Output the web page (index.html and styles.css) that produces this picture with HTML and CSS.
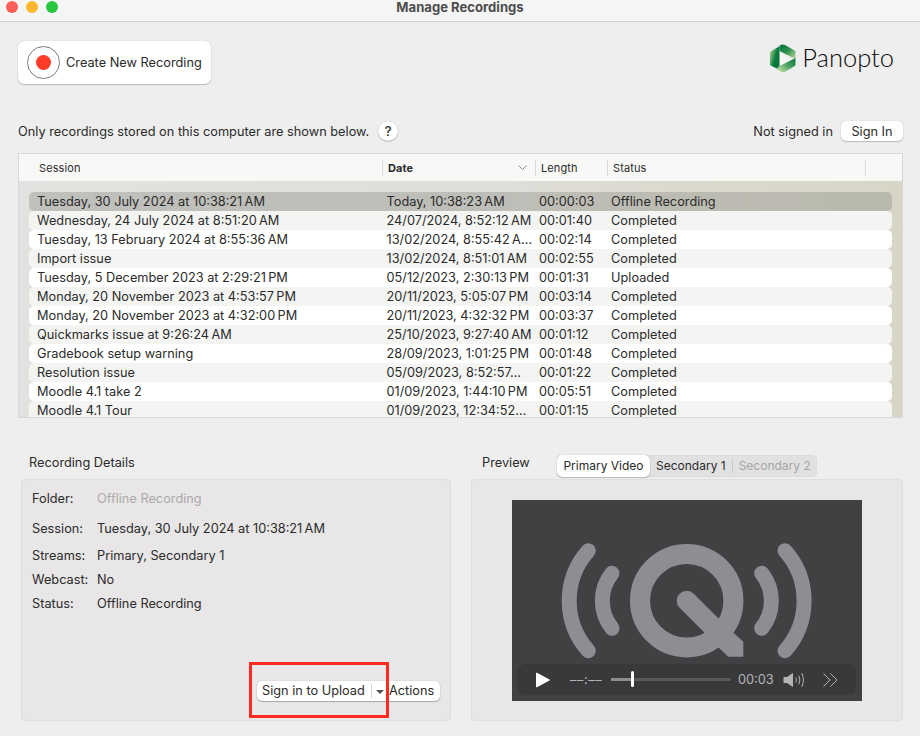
FILE: index.html
```html
<!DOCTYPE html>
<html lang="en">
<head>
  <meta charset="UTF-8" />
  <title>Manage Recordings</title>
  <link rel="stylesheet" href="styles.css">
</head>
<body>
  <header class="titlebar">
    <div class="lights">
      <span class="light red"></span>
      <span class="light yellow"></span>
      <span class="light green"></span>
    </div>
    <div class="title">Manage Recordings</div>
  </header>

  <main class="window">
    <section class="top">
      <button class="create-btn">
        <span class="rec-ring"><span class="rec-dot"></span></span>
        Create New Recording
      </button>
      <div class="logo">
        <svg class="logo-mark" width="26" height="29" viewBox="0 0 26 29">
          <defs>
            <linearGradient id="gradTop" x1="0.1" y1="0.1" x2="1" y2="0.9">
              <stop offset="0" stop-color="#0a7a3e" />
              <stop offset="0.45" stop-color="#2f9150" />
              <stop offset="1" stop-color="#b4d698" />
            </linearGradient>
            <linearGradient id="gradLeft" x1="0" y1="0.1" x2="1" y2="0.8">
              <stop offset="0" stop-color="#a8cf8c" />
              <stop offset="0.55" stop-color="#0d7c40" />
              <stop offset="1" stop-color="#06703a" />
            </linearGradient>
            <linearGradient id="gradBottom" x1="1" y1="0.1" x2="0.1" y2="0.9">
              <stop offset="0" stop-color="#0a7a3e" />
              <stop offset="0.5" stop-color="#4da263" />
              <stop offset="1" stop-color="#c0dca2" />
            </linearGradient>
          </defs>
          <path d="M0.5 8 L9 3 V25 L0.5 21 Z" fill="url(#gradLeft)" stroke="url(#gradLeft)" stroke-linejoin="round" />
          <path d="M9.5 1.5 Q13 -0.5 16 1.5 L24.5 6.5 Q25.5 7 25.5 8.5 V15 L9.5 7 Z" fill="url(#gradTop)" />
          <path d="M25.5 14 V20.5 Q25.5 21.8 24 22.5 L15.5 27.5 Q13 29 10.5 27.5 L7 25.5 L8 23 Z" fill="url(#gradBottom)" />
          <path d="M10 9 L20 15 L10 21 Z" fill="#f4f4f0" />
        </svg>
        <span class="logo-text">Panopto</span>
      </div>
    </section>

    <section class="notice">
      <span>Only recordings stored on this computer are shown below.</span>
      <button class="help-btn">?</button>
      <span class="signed-out">Not signed in</span>
      <button class="signin-btn">Sign In</button>
    </section>

    <section class="list">
      <div class="list-head">
        <div class="th">Session</div>
        <div class="th th-date">Date <svg width="9" height="5" viewBox="0 0 9 5"><path d="M0.5 0.5 L4.5 4.5 L8.5 0.5" fill="none" stroke="#8a8a8a" /></svg></div>
        <div class="th">Length</div>
        <div class="th">Status</div>
        <div class="th"></div>
      </div>
      <div class="list-body">
        <div class="row selected"><span>Tuesday, 30 July 2024 at 10:38:21&#8239;AM</span><span>Today, 10:38:23&#8239;AM</span><span>00:00:03</span><span>Offline Recording</span></div>
        <div class="row"><span>Wednesday, 24 July 2024 at 8:51:20&#8239;AM</span><span>24/07/2024, 8:52:12&#8239;AM</span><span>00:01:40</span><span>Completed</span></div>
        <div class="row"><span>Tuesday, 13 February 2024 at 8:55:36&#8239;AM</span><span>13/02/2024, 8:55:42&#8239;A…</span><span>00:02:14</span><span>Completed</span></div>
        <div class="row"><span>Import issue</span><span>13/02/2024, 8:51:01&#8239;AM</span><span>00:02:55</span><span>Completed</span></div>
        <div class="row"><span>Tuesday, 5 December 2023 at 2:29:21&#8239;PM</span><span>05/12/2023, 2:30:13&#8239;PM</span><span>00:01:31</span><span>Uploaded</span></div>
        <div class="row"><span>Monday, 20 November 2023 at 4:53:57&#8239;PM</span><span>20/11/2023, 5:05:07&#8239;PM</span><span>00:03:14</span><span>Completed</span></div>
        <div class="row"><span>Monday, 20 November 2023 at 4:32:00&#8239;PM</span><span>20/11/2023, 4:32:32&#8239;PM</span><span>00:03:37</span><span>Completed</span></div>
        <div class="row"><span>Quickmarks issue at 9:26:24&#8239;AM</span><span>25/10/2023, 9:27:40&#8239;AM</span><span>00:01:12</span><span>Completed</span></div>
        <div class="row"><span>Gradebook setup warning</span><span>28/09/2023, 1:01:25&#8239;PM</span><span>00:01:48</span><span>Completed</span></div>
        <div class="row"><span>Resolution issue</span><span>05/09/2023, 8:52:57…</span><span>00:01:22</span><span>Completed</span></div>
        <div class="row"><span>Moodle 4.1 take 2</span><span>01/09/2023, 1:44:10&#8239;PM</span><span>00:05:51</span><span>Completed</span></div>
        <div class="row"><span>Moodle 4.1 Tour</span><span>01/09/2023, 12:34:52…</span><span>00:01:15</span><span>Completed</span></div>
      </div>
    </section>

    <section class="bottom">
      <div class="details">
        <div class="section-title details-title">Recording Details</div>
        <div class="panel details-panel">
          <div class="detail folder"><span class="label">Folder:</span><span class="muted">Offline Recording</span></div>
          <div class="detail session"><span class="label">Session:</span><span>Tuesday, 30 July 2024 at 10:38:21&#8239;AM</span></div>
          <div class="detail"><span class="label">Streams:</span><span>Primary, Secondary 1</span></div>
          <div class="detail"><span class="label">Webcast:</span><span>No</span></div>
          <div class="detail"><span class="label">Status:</span><span>Offline Recording</span></div>
          <div class="upload-btn">
            <span class="upload-label">Sign in to Upload</span>
            <span class="upload-arrow"></span>
            <span>Actions</span>
          </div>
        </div>
      </div>

      <div class="preview">
        <div class="preview-head">
          <div class="section-title preview-title">Preview</div>
          <div class="tabs">
            <span class="tab active">Primary Video</span>
            <span class="tab">Secondary 1</span>
            <span class="tab-sep"></span>
            <span class="tab disabled">Secondary 2</span>
          </div>
        </div>
        <div class="panel preview-panel">
          <div class="video">
            <svg class="q-logo" width="350" height="201" viewBox="0 0 350 201">
              <g fill="none" stroke="#8e8e92" stroke-linecap="round">
                <circle cx="174.7" cy="100.7" r="46.7" stroke-width="20" />
                <path d="M174.7 100.7 L210 136" stroke-width="20" />
                <path d="M100 73.3 A44 44 0 0 0 100 128.3" stroke-width="15" />
                <path d="M76.3 50.7 A75 75 0 0 0 76.3 150.7" stroke-width="15" />
                <path d="M249.7 73.3 A44 44 0 0 1 249.7 128.3" stroke-width="15" />
                <path d="M273 50.7 A75 75 0 0 1 273 150.7" stroke-width="15" />
              </g>
              <path d="M221.3 132.7 L231.3 141.7 V156.7 H216.3 L206.3 147.3 Z" fill="#8e8e92" />
            </svg>
            <div class="controls">
              <svg class="play" width="14" height="16" viewBox="0 0 14 16"><path d="M0.5 1 L13.5 8 L0.5 15 Z" fill="#fff" stroke="#fff" stroke-linejoin="round" /></svg>
              <span class="time-left">––:––</span>
              <div class="track"><div class="track-fill"></div><div class="thumb"></div></div>
              <span class="time-right">00:03</span>
              <svg class="volume" width="22" height="16" viewBox="0 0 22 16">
                <path d="M0.5 5 H4 L10 1 V15 L4 11 H0.5 Z" fill="#b4b4b6" />
                <g fill="none" stroke="#b4b4b6" stroke-linecap="round">
                  <path d="M13 6 Q14 8 13 10" />
                  <path d="M16 4 Q18 8 16 12" />
                  <path d="M19 1.5 Q22 8 19 14.5" />
                </g>
              </svg>
              <svg class="forward" width="15" height="14" viewBox="0 0 15 14">
                <g fill="none" stroke="#b4b4b6"><path d="M0.5 0.5 L7 7 L0.5 13.5" /><path d="M7.5 0.5 L14 7 L7.5 13.5" /></g>
              </svg>
            </div>
          </div>
        </div>
      </div>
    </section>
  </main>

  <div class="callout"></div>
</body>
</html>
```

FILE: styles.css
```css
* {
  box-sizing: border-box;
}

html, body {
  margin: 0;
  height: 100%;
}

body {
  width: 920px;
  height: 736px;
  overflow: hidden;
  position: relative;
  background-color: #eeeeee;
  color: #2b2b2b;
  font-family: Inter, "Liberation Sans", sans-serif;
  font-size: 12.75px;
}

button {
  font-family: inherit;
  font-size: inherit;
  color: inherit;
  border: none;
  padding: 0;
}

/* Title bar */
.titlebar {
  height: 22px;
  background-color: #f5f5f5;
  border-bottom: 1px solid #d2d2d2;
  display: flex;
  align-items: center;
  justify-content: center;
  position: relative;
}

.lights {
  position: absolute;
  left: 6px;
  top: 1px;
  display: flex;
  gap: 8px;
}

.light {
  width: 12px;
  height: 12px;
  border-radius: 50%;
}

.red { background-color: #fc5f57; }
.yellow { background-color: #fcb72f; }
.green { background-color: #29c63f; }

.title {
  font-weight: 700;
  font-size: 13.1px;
  color: #4d4d4d;
  margin-top: -8px;
}

/* Top area */
.top {
  height: 93px;
  display: flex;
  justify-content: space-between;
  align-items: flex-start;
  padding: 19px 26px 0 18px;
}

.create-btn {
  width: 193px;
  height: 43px;
  background: #fff;
  border-radius: 6px;
  box-shadow: 0 0 1px rgba(0,0,0,0.3), 0 1px 1px rgba(0,0,0,0.2);
  display: flex;
  align-items: center;
  gap: 6px;
  padding-left: 9px;
}

.rec-ring {
  width: 33px;
  height: 33px;
  border: 1px solid #7d7d7d;
  border-radius: 50%;
  display: flex;
  align-items: center;
  justify-content: center;
}

.rec-dot {
  width: 15px;
  height: 15px;
  border-radius: 50%;
  background-color: #ff3b2a;
}

.logo {
  display: flex;
  align-items: center;
  gap: 6px;
  margin-top: 3px;
}

.logo-text {
  font-family: Lato, sans-serif;
  font-weight: 300;
  font-size: 25.5px;
  color: #0a0a0a;
  line-height: 29px;
  margin-top: -2px;
}

.notice {
  height: 32px;
  display: flex;
  align-items: center;
  padding: 0 17px 0 18px;
}

.help-btn {
  width: 20px;
  height: 20px;
  margin-left: 9px;
  border-radius: 50%;
  background: #fff;
  font-weight: 500;
  font-size: 13px;
  box-shadow: 0 0 1px rgba(0,0,0,0.3), 0 1px 1px rgba(0,0,0,0.2);
}

.signed-out {
  margin-left: auto;
}

.signin-btn {
  width: 62px;
  height: 20px;
  margin-left: 8px;
  border-radius: 5px;
  background: #fff;
  box-shadow: 0 0 1px rgba(0,0,0,0.3), 0 1px 1px rgba(0,0,0,0.2);
}

/* Recording list */
.list {
  margin: 6px 17px 0 18px;
  height: 265px;
  border: 1px solid #d8d8d8;
  overflow: hidden;
}

.list-head {
  height: 27px;
  background-color: #f8f8f7;
  display: grid;
  grid-template-columns: 364px 153px 72px 258px 1fr;
  align-items: center;
  font-size: 11px;
  padding-left: 0;
}

.th {
  height: 16px;
  line-height: 16px;
  padding-left: 5px;
  border-right: 1px solid #dcdcdc;
  display: flex;
  align-items: center;
  justify-content: space-between;
  padding-right: 8px;
  letter-spacing: 0.1px;
}

.th:first-child {
  padding-left: 20px;
}

.th:last-child {
  border-right: none;
}

.th-date {
  font-weight: 700;
}

.list-body {
  height: 237px;
  padding: 11px 10px 0;
  background: linear-gradient(100deg, #e2e2e0 0%, #dfdeda 50%, #dbd9cc 75%, #d6d5c6 100%);
}

.row {
  height: 19px;
  line-height: 19px;
  display: grid;
  grid-template-columns: 349.5px 152.5px 72px 1fr;
  padding-left: 8px;
  border-radius: 5px;
  white-space: nowrap;
  background-color: #f4f5f3;
}

.row:nth-child(odd) {
  background-color: #fff;
}

.row.selected {
  background-color: rgba(150, 150, 145, 0.45);
}

/* Bottom panels */
.bottom {
  display: grid;
  grid-template-columns: 430px 432px;
  column-gap: 20px;
  padding: 32px 0 0 21px;
}

.section-title {
  height: 29px;
  line-height: 26px;
}

.details-title {
  padding-left: 8px;
}

.panel {
  height: 242px;
  background-color: #e8e6e7;
  border: 1px solid #e0dfdf;
  border-radius: 4px;
  position: relative;
}

.details-panel {
  padding: 7px 0 0 10px;
}

.detail {
  height: 24px;
  line-height: 24px;
  display: grid;
  grid-template-columns: 65px 1fr;
}

.detail.folder {
  margin-bottom: 6px;
}

.detail.session {
  margin-bottom: 3px;
}

.muted {
  color: #aaaaaa;
}

.upload-btn {
  position: absolute;
  left: 235px;
  top: 201px;
  width: 183px;
  height: 20px;
  background: #fff;
  border-radius: 5px;
  box-shadow: 0 0 1px rgba(0,0,0,0.3), 0 1px 1px rgba(0,0,0,0.25);
  display: flex;
  align-items: center;
  padding-left: 5px;
  line-height: 20px;
}

.upload-label {
  width: 110px;
  border-right: 1px solid #d4d4d4;
  height: 14px;
  line-height: 14px;
  white-space: nowrap;
}

.upload-arrow {
  width: 0;
  height: 0;
  margin: 1px 5px 0 4px;
  border-left: 4px solid transparent;
  border-right: 4px solid transparent;
  border-top: 4px solid #555;
}

/* Preview */
.preview-head {
  display: flex;
  height: 29px;
}

.preview-title {
  width: 86px;
  padding-left: 11px;
}

.tabs {
  height: 22px;
  margin-top: 5px;
  width: 260px;
  background-color: #e2e1e1;
  border-radius: 5px;
  box-shadow: inset 0 0 0 1px #dcdbdb;
  display: flex;
  align-items: center;
  white-space: nowrap;
  font-size: 12px;
}

.tab {
  flex-shrink: 0;
  height: 22px;
  line-height: 22px;
  padding: 0 6px;
}

.tab.active {
  width: 93px;
  padding: 0;
  background: #fff;
  border-radius: 5px;
  box-shadow: 0 0 1px rgba(0,0,0,0.4), 0 1px 1px rgba(0,0,0,0.2);
  text-align: center;
}

.tab.disabled {
  color: #a5a5a5;
}

.tab-sep {
  flex-shrink: 0;
  width: 1px;
  height: 14px;
  background-color: #c8c8c8;
}

.preview-panel {
  display: flex;
  justify-content: center;
  padding-top: 20px;
}

.video {
  width: 350px;
  height: 201px;
  background-color: #414143;
  position: relative;
}

.q-logo {
  display: block;
}

.controls {
  position: absolute;
  left: 6px;
  top: 164px;
  width: 338px;
  height: 31px;
  border-radius: 8px;
  background-color: #39393b;
  display: flex;
  align-items: center;
  color: #b4b4b6;
  padding-left: 18px;
}

.time-left {
  margin-left: 20px;
  width: 41px;
  white-space: nowrap;
  letter-spacing: 0.6px;
}

.track {
  position: relative;
  width: 120px;
  height: 3px;
  background-color: #59595b;
  border-radius: 2px;
}

.track-fill {
  width: 21px;
  height: 3px;
  background-color: #8e8e90;
}

.thumb {
  position: absolute;
  left: 20px;
  top: -7px;
  width: 3px;
  height: 16px;
  border-radius: 2px;
  background-color: #fff;
}

.time-right {
  margin-left: 7px;
  width: 45px;
}

.forward {
  margin-left: 18px;
}

/* Red annotation box */
.callout {
  position: absolute;
  left: 249px;
  top: 662px;
  width: 140px;
  height: 56px;
  border: 3px solid #fe2a20;
}
```
